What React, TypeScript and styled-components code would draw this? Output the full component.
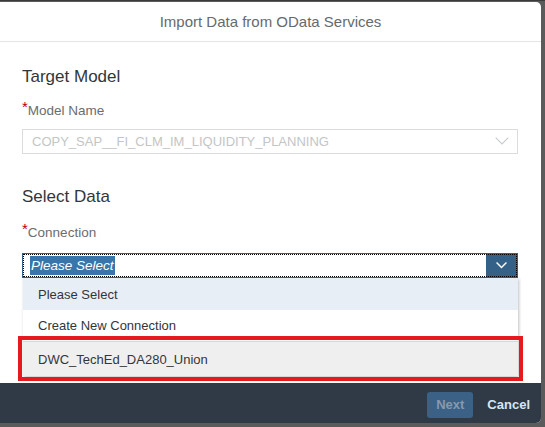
import React from "react";
import styled, { createGlobalStyle } from "styled-components";

const Global = createGlobalStyle`
  html, body { margin: 0; padding: 0; }
  body {
    background: #5b5b5b;
    font-family: "Liberation Sans", Arial, sans-serif;
    width: 545px;
    height: 427px;
    overflow: hidden;
  }
`;

const Backdrop = styled.div`
  width: 545px;
  height: 427px;
  padding-top: 2px;
  box-sizing: border-box;
  background: linear-gradient(#3a3a3a 0 1px, #5b5b5b 1px);
`;

const Dialog = styled.div`
  width: 541px;
  height: 421px;
  background: #ffffff;
  border-radius: 0 5px 5px 0;
  display: flex;
  flex-direction: column;
  overflow: hidden;
`;

const Header = styled.div`
  height: 39px;
  flex: 0 0 39px;
  border-bottom: 1px solid #e5e5e5;
  display: flex;
  align-items: center;
  justify-content: center;
  font-size: 15px;
  color: #666a6e;
`;

const Body = styled.div`
  flex: 1;
  padding: 0 23px 0 22px;
  position: relative;
`;

const SectionTitle = styled.div<{ $top: number }>`
  margin-top: ${(p) => p.$top}px;
  font-size: 17px;
  line-height: 20px;
  color: #32363a;
`;

const Label = styled.div<{ $top: number }>`
  margin-top: ${(p) => p.$top}px;
  font-size: 13.5px;
  line-height: 16px;
  color: #6a6d70;
`;

const Star = styled.span`
  color: #bb0000;
  font-size: 15px;
  position: relative;
  top: -3px;
`;

const Field = styled.div<{ $top: number; $active?: boolean }>`
  margin-top: ${(p) => p.$top}px;
  height: 25px;
  box-sizing: border-box;
  border: 1px solid ${(p) => (p.$active ? "#346187" : "#dcdcdc")};
  outline: ${(p) => (p.$active ? "1px dotted #000" : "none")};
  outline-offset: -2px;
  display: flex;
  align-items: center;
  position: relative;
`;

const FieldText = styled.div`
  flex: 1;
  padding-left: 9px;
  font-size: 13px;
  color: #c3c5c7;
  white-space: nowrap;
  overflow: hidden;
`;

const SelectedText = styled.span`
  margin-left: 7px;
  padding: 1px 1px;
  background: #3875aa;
  color: #ffffff;
  font-style: italic;
  font-size: 13.5px;
  line-height: 17px;
`;

const Spacer = styled.div`
  flex: 1;
`;

const ArrowBox = styled.div<{ $active?: boolean }>`
  width: ${(p) => (p.$active ? 31 : 30)}px;
  align-self: stretch;
  display: flex;
  align-items: center;
  justify-content: center;
  background: ${(p) => (p.$active ? "#346187" : "transparent")};
`;

const Menu = styled.div`
  position: absolute;
  left: 0;
  right: -1px;
  top: 24px;
  background: #fff;
  box-shadow: 1px 1px 3px rgba(0, 0, 0, 0.25);
  display: flex;
  flex-direction: column;
`;

const MenuItem = styled.div<{ $bg: string; $h: number; $mark?: boolean }>`
  height: ${(p) => p.$h}px;
  background: ${(p) => p.$bg};
  display: flex;
  align-items: center;
  padding-left: 15px;
  font-size: 13px;
  color: #32363a;
  border-top: ${(p) => (p.$mark ? "1px solid #d8d8d8" : "none")};
  outline: ${(p) => (p.$mark ? "4px solid #e8181f" : "none")};
  outline-offset: 1px;
`;

const Footer = styled.div`
  height: 40px;
  flex: 0 0 40px;
  background: #2f3a46;
  display: flex;
  align-items: center;
  justify-content: flex-end;
  padding-right: 11px;
  gap: 14px;
`;

const Button = styled.button<{ $primary?: boolean }>`
  font-family: "Liberation Sans", Arial, sans-serif;
  font-size: 13px;
  font-weight: 700;
  height: 26px;
  border: none;
  border-radius: 3px;
  padding: 0 ${(p) => (p.$primary ? 9 : 0)}px;
  background: ${(p) => (p.$primary ? "#3b6286" : "transparent")};
  color: ${(p) => (p.$primary ? "#8699ad" : "#d6e6f5")};
  margin-top: 3px;
`;

const Chevron = ({ color, w }: { color: string; w: number }) => (
  <svg width={w} height={w * 0.6} viewBox="0 0 10 6">
    <path d="M0.5 0.5 L5 5 L9.5 0.5" fill="none" stroke={color} strokeWidth={w > 12 ? 0.8 : 1.3} />
  </svg>
);

export default function App() {
  return (
    <>
      <Global />
      <Backdrop>
        <Dialog>
          <Header>Import Data from OData Services</Header>
          <Body>
            <SectionTitle $top={25}>Target Model</SectionTitle>
            <Label $top={15}>
              <Star>*</Star>Model Name
            </Label>
            <Field $top={10}>
              <FieldText>COPY_SAP__FI_CLM_IM_LIQUIDITY_PLANNING</FieldText>
              <ArrowBox>
                <Chevron color="#c8cbce" w={14} />
              </ArrowBox>
            </Field>
            <SectionTitle $top={33}>Select Data</SectionTitle>
            <Label $top={17}>
              <Star>*</Star>Connection
            </Label>
            <Field $top={12} $active>
              <SelectedText>Please Select</SelectedText>
              <Spacer />
              <ArrowBox $active>
                <Chevron color="#ffffff" w={11} />
              </ArrowBox>
              <Menu>
                <MenuItem $bg="#e8eef6" $h={32}>Please Select</MenuItem>
                <MenuItem $bg="#ffffff" $h={31}>Create New Connection</MenuItem>
                <MenuItem $bg="#efefef" $h={34} $mark>DWC_TechEd_DA280_Union</MenuItem>
              </Menu>
            </Field>
          </Body>
          <Footer>
            <Button $primary>Next</Button>
            <Button>Cancel</Button>
          </Footer>
        </Dialog>
      </Backdrop>
    </>
  );
}
